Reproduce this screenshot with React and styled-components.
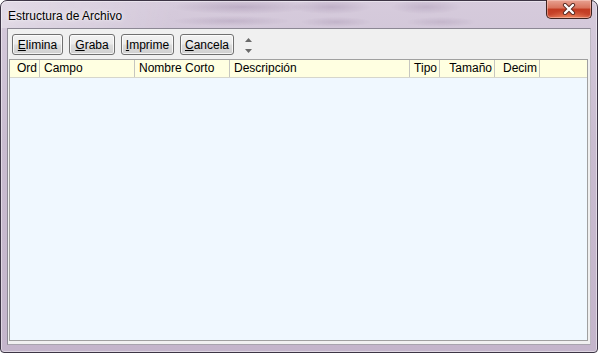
import React from "react";
import styled, { createGlobalStyle } from "styled-components";

const Global = createGlobalStyle`
  html, body { margin: 0; padding: 0; background: #ffffff; }
  body { font-family: "Liberation Sans", Arial, sans-serif; font-size: 12px; color: #000; }
  #root { width: 600px; height: 355px; }
`;

const Window = styled.div`
  box-sizing: border-box;
  width: 598px;
  height: 353px;
  display: flex;
  flex-direction: column;
  padding: 0 6px 7px 6px;
  border: 1px solid #3d3545;
  border-radius: 7px 7px 4px 4px;
  background: linear-gradient(180deg, #d6cbdc 0%, #c9bcd0 40%, #c4b5cb 100%);
  box-shadow: inset 0 0 0 1px rgba(255, 255, 255, 0.45);
`;

const TitleBar = styled.div`
  height: 27px;
  margin: 0 -6px;
  padding: 0 5px 0 7px;
  display: flex;
  align-items: flex-start;
  justify-content: space-between;
  border-radius: 6px 6px 0 0;
  background:
    radial-gradient(ellipse 70px 7px at 240px 6px, rgba(105, 75, 120, 0.22), transparent),
    radial-gradient(ellipse 40px 7px at 330px 6px, rgba(105, 75, 120, 0.2), transparent),
    radial-gradient(ellipse 35px 7px at 425px 6px, rgba(105, 75, 120, 0.18), transparent),
    radial-gradient(ellipse 60px 5px at 230px 20px, rgba(105, 75, 120, 0.16), transparent),
    radial-gradient(ellipse 35px 5px at 335px 21px, rgba(105, 75, 120, 0.16), transparent),
    radial-gradient(ellipse 35px 5px at 440px 21px, rgba(105, 75, 120, 0.14), transparent),
    linear-gradient(100deg, rgba(255, 255, 255, 0.3) 0%, rgba(255, 255, 255, 0) 30%);
`;

const Title = styled.span`
  margin-top: 8px;
  font-size: 12px;
  line-height: 14px;
  color: #000;
  text-shadow: 0 0 6px rgba(255, 255, 255, 0.9), 0 0 2px rgba(255, 255, 255, 0.8);
`;

const CloseButton = styled.div`
  box-sizing: border-box;
  width: 46px;
  height: 19px;
  margin-top: -1px;
  display: flex;
  align-items: center;
  justify-content: center;
  border: 1px solid #3f2420;
  border-top: none;
  border-radius: 0 0 5px 5px;
  background:
    radial-gradient(ellipse 22px 8px at 50% 100%, rgba(255, 160, 110, 0.6), transparent),
    linear-gradient(180deg, #e8a292 0%, #d8725b 45%, #c23b21 50%, #c6432a 80%, #d6654a 100%);
  box-shadow: inset 0 0 0 1px rgba(255, 220, 210, 0.45);
`;

const Client = styled.div`
  flex: 1;
  display: flex;
  flex-direction: column;
  border: 1px solid #8c8894;
  border-right-color: #bdb8c2;
  border-bottom-color: #a8a4ae;
  background: #f0f0f0;
  min-height: 0;
`;

const Toolbar = styled.div`
  box-sizing: border-box;
  height: 30px;
  padding: 5px 0 0 4px;
  display: flex;
  align-items: flex-start;
  gap: 6px;
`;

const ToolButton = styled.button`
  box-sizing: border-box;
  width: ${(p) => p.$w}px;
  height: 21px;
  padding: 0;
  margin: 0;
  border: 1px solid #707070;
  border-radius: 3px;
  background: linear-gradient(180deg, #f2f2f2 0%, #ebebeb 48%, #dddddd 52%, #cfcfcf 100%);
  box-shadow: inset 0 0 0 1px rgba(255, 255, 255, 0.75);
  font-family: "Liberation Sans", Arial, sans-serif;
  font-size: 12px;
  line-height: 18px;
  color: #000;
  text-align: center;
  white-space: nowrap;
  u { text-decoration: underline; text-underline-offset: 1px; }
`;

const Spinner = styled.div`
  margin: 4px 0 0 1px;
  width: 14px;
  height: 15px;
  display: flex;
  flex-direction: column;
  align-items: center;
  justify-content: space-between;
`;

const Grid = styled.div`
  flex: 1;
  margin: 0 2px 3px 1px;
  border: 1px solid #a0a0a0;
  background: #f0f8ff;
  display: flex;
  flex-direction: column;
`;

const HeaderRow = styled.div`
  display: grid;
  grid-template-columns: 30px 95px 95px 180px 30px 55px 45px 1fr;
  height: 18px;
  box-sizing: border-box;
  background: #ffffe1;
  border-bottom: 1px solid #d6d6cc;
`;

const HeaderCell = styled.div`
  box-sizing: border-box;
  border-right: ${(p) => (p.$last ? "none" : "1px solid #c6c6c0")};
  padding: ${(p) => (p.$right ? "0 2px 0 0" : "0 0 0 4px")};
  text-align: ${(p) => (p.$right ? "right" : "left")};
  font-size: 12px;
  line-height: 17px;
  white-space: nowrap;
  overflow: hidden;
  color: #000;
`;

const columns = [
  { label: "Ord", right: true },
  { label: "Campo" },
  { label: "Nombre Corto" },
  { label: "Descripción" },
  { label: "Tipo", right: true },
  { label: "Tamaño", right: true },
  { label: "Decim", right: true },
  { label: "", last: true },
];

const buttons = [
  { key: "E", rest: "limina", w: 51 },
  { key: "G", rest: "raba", w: 46 },
  { key: "I", rest: "mprime", w: 53 },
  { key: "C", rest: "ancela", w: 54 },
];

export default function App() {
  return (
    <>
      <Global />
      <Window>
        <TitleBar>
          <Title>Estructura de Archivo</Title>
          <CloseButton>
            <svg width="14" height="12" viewBox="0 0 14 12">
              <path d="M3 2 L11 10 M11 2 L3 10" stroke="#5a2a22" strokeWidth="4.2" strokeLinecap="round" />
              <path d="M3 2 L11 10 M11 2 L3 10" stroke="#ffffff" strokeWidth="2.4" strokeLinecap="round" />
            </svg>
          </CloseButton>
        </TitleBar>
        <Client>
          <Toolbar>
            {buttons.map((b) => (
              <ToolButton key={b.key} $w={b.w}>
                <u>{b.key}</u>
                {b.rest}
              </ToolButton>
            ))}
            <Spinner>
              <svg width="7" height="4" viewBox="0 0 7 4">
                <path d="M0 4 L3.5 0 L7 4 Z" fill="#6a6a6a" />
              </svg>
              <svg width="7" height="4" viewBox="0 0 7 4">
                <path d="M0 0 L7 0 L3.5 4 Z" fill="#6a6a6a" />
              </svg>
            </Spinner>
          </Toolbar>
          <Grid>
            <HeaderRow>
              {columns.map((c, i) => (
                <HeaderCell key={i} $right={c.right} $last={c.last}>
                  {c.label}
                </HeaderCell>
              ))}
            </HeaderRow>
          </Grid>
        </Client>
      </Window>
    </>
  );
}
